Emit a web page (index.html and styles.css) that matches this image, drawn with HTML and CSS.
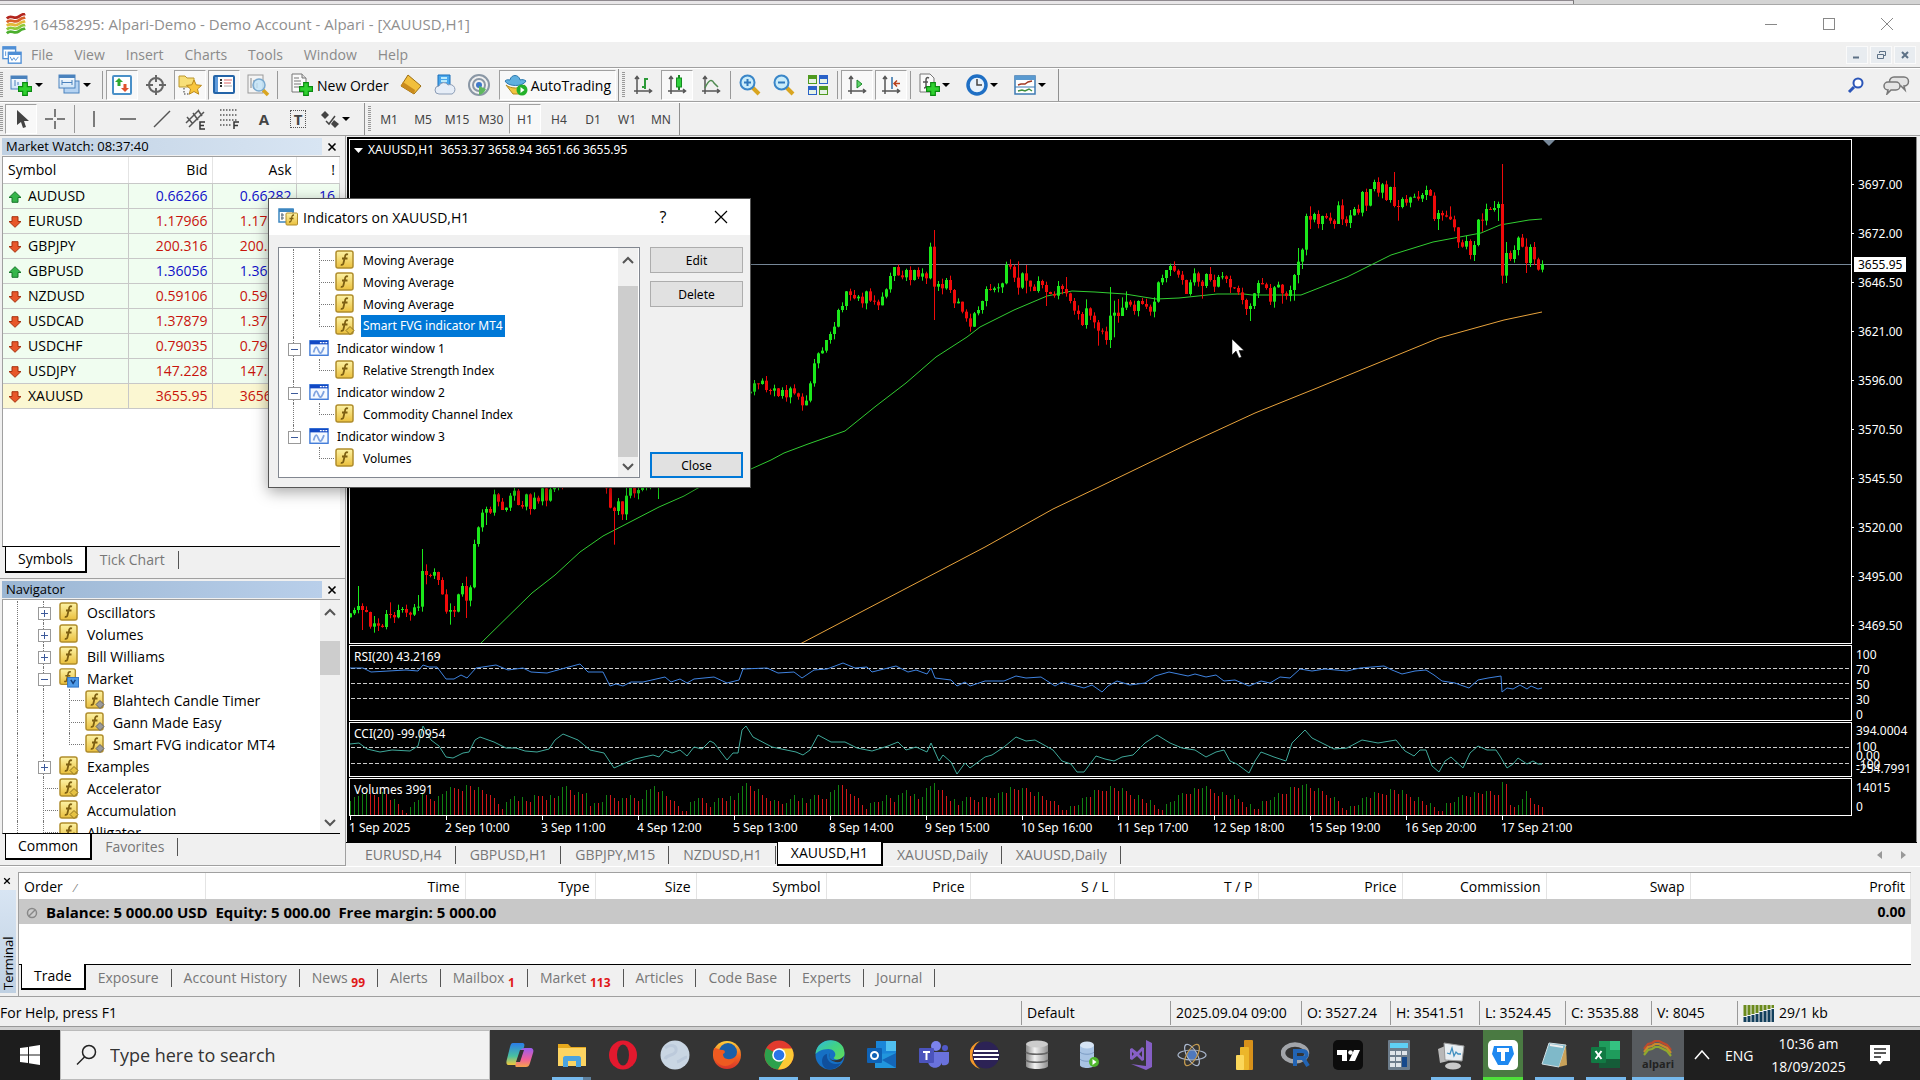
FILE: index.html
```html
<!DOCTYPE html>
<html lang="en">
<head>
    <meta charset="UTF-8">
    <meta name="viewport" content="width=device-width, initial-scale=1.0">
    <title>16458295: Alpari-Demo</title>
    <link rel="stylesheet" href="styles.css">
</head>
<body>

<svg class="defs" width="0" height="0">
    <defs>
        <linearGradient id="gold" x1="0" y1="0" x2="0" y2="1"><stop offset="0" stop-color="#fdf3a6"/><stop offset="1" stop-color="#eabf3c"/></linearGradient>
        <linearGradient id="win" x1="0" y1="0" x2="0" y2="1"><stop offset="0" stop-color="#fff"/><stop offset="1" stop-color="#cfe4f7"/></linearGradient>
        <linearGradient id="metal" x1="0" y1="0" x2="1" y2="0"><stop offset="0" stop-color="#8a8a8a"/><stop offset=".4" stop-color="#f2f2f2"/><stop offset="1" stop-color="#8f8f8f"/></linearGradient>
        <linearGradient id="edge" x1="0" y1="0" x2="1" y2="1"><stop offset="0" stop-color="#2fb6e8"/><stop offset=".45" stop-color="#3fd08a"/><stop offset="1" stop-color="#63dd55"/></linearGradient>
        <linearGradient id="fire" x1="0" y1="0" x2="0" y2="1"><stop offset="0" stop-color="#ffd13c"/><stop offset=".5" stop-color="#f26b21"/><stop offset="1" stop-color="#d8322a"/></linearGradient>
        <linearGradient id="copa" x1="0" y1="0" x2="0" y2="1"><stop offset="0" stop-color="#2a7de8"/><stop offset=".6" stop-color="#49c0a0"/><stop offset="1" stop-color="#f4c93b"/></linearGradient>
        <linearGradient id="copb" x1="0" y1="0" x2="0" y2="1"><stop offset="0" stop-color="#9a5cf0"/><stop offset=".6" stop-color="#f0609a"/><stop offset="1" stop-color="#f5a34a"/></linearGradient>

        <symbol id="plus" viewBox="0 0 12 12"><path d="M4 .5h4V4h3.500v4H8v3.500H4V8H.5V4H4z" fill="#2fd12f" stroke="#0b8a12"/></symbol>
        <symbol id="fx" viewBox="0 0 20 20"><rect x="1" y="1" width="17" height="17" rx="2" fill="url(#gold)" stroke="#b08d2c" stroke-width="1.500"/><path d="M13 4.500c-2-.8-2.700.5-3 2L8.500 13c-.3 1.500-1 2.300-2.700 1.600M7 8.500h5.500" fill="none" stroke="#7d5f12" stroke-width="1.800"/></symbol>
        <symbol id="fxg" viewBox="0 0 20 20"><use href="#fx"/><path d="M15 10.500l4 4-4 4-4-4z" fill="#9a9a9a" stroke="#666"/></symbol>
        <symbol id="fxy" viewBox="0 0 20 20"><use href="#fx"/><path d="M15 10.500l4 4-4 4-4-4z" fill="#e6c243" stroke="#8f7420"/></symbol>
        <symbol id="fxm" viewBox="0 0 22 22"><use href="#fx" width="20" height="20"/><rect x="9.500" y="10.500" width="12" height="10.500" fill="#4f9be8" stroke="#2a6fc4"/><path d="M13 13l2.500 4 2.500-4" fill="none" stroke="#123f7d" stroke-width="1.500"/></symbol>
        <symbol id="iw" viewBox="0 0 22 18"><rect x="1" y="1" width="20" height="16" fill="#f4f9ff" stroke="#3c78d8" stroke-width="1.500"/><path d="M1 1h20v4H1z" fill="#1148c4"/><path d="M12 3h2m1 0h2m1 0h2" stroke="#fff" stroke-width="1.300"/><path d="M5 14c2.500-9 4-6 5.500-2s3 4 6-4" fill="none" stroke="#7fa3e0" stroke-width="2"/></symbol>
        <symbol id="up" viewBox="0 0 14 12"><path d="M7 .7l6 5.800H10v4.800H4V6.500H1z" fill="#35b54a" stroke="#17752a"/></symbol>
        <symbol id="down" viewBox="0 0 14 12"><path d="M7 11.300l6-5.800H10V.7H4v4.800H1z" fill="#e8572a" stroke="#a5300f"/></symbol>
        <symbol id="x" viewBox="0 0 10 10"><path d="M1.500 1.500l7 7m0-7l-7 7" stroke="#000" stroke-width="1.600"/></symbol>
        <symbol id="caret" viewBox="0 0 8 4"><path d="M0 0h8L4 4z"/></symbol>
        <symbol id="axes" viewBox="0 0 20 20"><path d="M4 2v17M1 16h17M2 4l2-2.500L6 4M16 14l2.500 2-2.500 2" fill="none" stroke="#555" stroke-width="1.500"/></symbol>
        <symbol id="doc" viewBox="0 0 20 22"><path d="M2 1h10l4 4v14H2z" fill="#fafafa" stroke="#777"/><path d="M12 1v4h4" fill="#ddd" stroke="#777"/><path d="M4 8h7M4 11h7M4 14h5M4 5h5" stroke="#777"/></symbol>
        <symbol id="lens" viewBox="0 0 22 22"><path d="M13 13l7 7" stroke="#d9a520" stroke-width="4"/><circle cx="8.500" cy="8.500" r="7" fill="#c9ecfa" stroke="#3a86c8" stroke-width="2"/></symbol>
    </defs>
</svg>

<div class="behind"><div class="behind-win"></div></div>

<header class="titlebar">
    <svg class="logo" viewBox="0 0 22 24"><g fill="none" stroke-width="3"><path d="M1 6c5-5 8 2 13-2s5-2 7-3" stroke="#b3261e"/><path d="M1 10c5-5 8 2 13-2s5-2 7-3" stroke="#d9622b"/><path d="M1 14c5-5 8 2 13-2s5-2 7-3" stroke="#e3b83a"/><path d="M1 18c5-5 8 2 13-2s5-2 7-3" stroke="#8fc93a"/><path d="M1 22c5-5 8 2 13-2s5-2 7-3" stroke="#4caf2e"/></g></svg>
    <h1>16458295: Alpari-Demo - Demo Account - Alpari - [XAUUSD,H1]</h1>
    <div class="win-btns">
        <button aria-label="Minimize"><svg width="12" height="12"><path d="M0 6.500h12" stroke="#888"/></svg></button>
        <button aria-label="Maximize"><svg width="12" height="12"><rect x=".5" y=".5" width="11" height="11" fill="none" stroke="#888"/></svg></button>
        <button aria-label="Close"><svg width="12" height="12"><path d="M0 0l12 12M12 0L0 12" stroke="#888"/></svg></button>
    </div>
</header>

<nav class="menubar">
    <svg class="menu-logo" viewBox="0 0 22 22"><rect x="1" y="2" width="14" height="13" fill="#fff" stroke="#4f8fd6" stroke-width="1.500"/><path d="M1 3.500h14" stroke="#4f8fd6" stroke-width="3"/><rect x="7" y="8" width="14" height="12" fill="#fff" stroke="#4f8fd6" stroke-width="1.500"/><path d="M7 9.500h14" stroke="#4f8fd6" stroke-width="3"/><path d="M9 13l2 4 2-3 2 3 3-4M4 7v5m3-4v3" stroke="#4f8fd6" fill="none"/></svg>
    <a href="#">File</a><a href="#">View</a><a href="#">Insert</a><a href="#">Charts</a><a href="#">Tools</a><a href="#">Window</a><a href="#">Help</a>
    <div class="mdi-btns">
        <button aria-label="Minimize chart"><svg width="8" height="8"><path d="M0 6.500h6" stroke="#5d7186" stroke-width="2"/></svg></button>
        <button aria-label="Restore chart"><svg width="9" height="8"><path d="M2.500 2V.5h6v4H7M.5 3.500h6v4h-6z" fill="none" stroke="#5d7186"/></svg></button>
        <button aria-label="Close chart"><svg width="8" height="8"><path d="M1 1l6 6m0-6L1 7" stroke="#5d7186" stroke-width="2"/></svg></button>
    </div>
</nav>

<div class="toolbar">
    <div class="group">
        <i class="grip"></i>
        <button class="tool drop" aria-label="New chart"><svg width="24" height="24"><rect x="2" y="3" width="16" height="13" fill="url(#win)" stroke="#4a82bd"/><path d="M2 4.500h16" stroke="#4a82bd" stroke-width="3"/><path d="M6 7v6m3-4v3" stroke="#4a82bd"/><use href="#plus" x="9" y="9" width="14" height="14"/></svg><svg width="8" height="4"><use href="#caret"/></svg></button>
        <button class="tool drop" aria-label="Profiles"><svg width="24" height="24"><rect x="7" y="8" width="15" height="12" fill="#b5d3f2" stroke="#4a82bd"/><rect x="2" y="2" width="16" height="13" fill="url(#win)" stroke="#4a82bd"/><path d="M2 3.500h16" stroke="#4a82bd" stroke-width="3"/><path d="M5 7v5M15 7v5M5 9.500h10" stroke="#4a82bd"/></svg><svg width="8" height="4"><use href="#caret"/></svg></button>
        <i class="sep"></i>
        <button class="tool on" aria-label="Market Watch"><svg width="22" height="22"><rect x="2" y="2" width="18" height="18" rx="1" fill="#fff" stroke="#4a90c8" stroke-width="2"/><path d="M8 4l4 4h-2.500v4h-3V8H4z" fill="#2fa82f"/><path d="M14 18l4-4h-2.500v-4h-3v4H10z" fill="#e0502a"/></svg></button>
        <button class="tool" aria-label="Data Window"><svg width="22" height="22"><circle cx="11" cy="11" r="7" fill="none" stroke="#666" stroke-width="2"/><path d="M11 1v7m0 6v7M1 11h7m6 0h7" stroke="#666" stroke-width="2"/></svg></button>
        <button class="tool on" aria-label="Navigator"><svg width="24" height="24"><path d="M1 3h6l2 2h7v9H1z" fill="#f8df78" stroke="#b9962e"/><path d="M6 15v6h6" fill="none" stroke="#333" stroke-dasharray="1.500 1.500"/><path d="M16 7l2.200 4.800 5.300.6-4 3.600 1.200 5.200-4.700-2.700-4.700 2.700 1.200-5.200-4-3.600 5.300-.6z" fill="#f9c63d" stroke="#bb8a1c"/></svg></button>
        <button class="tool on" aria-label="Terminal"><svg width="22" height="22"><rect x="1" y="2" width="20" height="17" rx="1" fill="#fff" stroke="#2464a8" stroke-width="2"/><path d="M2 3h3v15H2z" fill="#5f9bdb"/><path d="M7 6h2M7 9h2M7 12h2" stroke="#333" stroke-width="2"/><path d="M11 6h8M11 9h7" stroke="#d66"/><path d="M11 12h8" stroke="#aaa"/></svg></button>
        <button class="tool" aria-label="Strategy Tester"><svg width="24" height="24"><rect x="2" y="2" width="15" height="18" fill="#f4f4f4" stroke="#999"/><path d="M5 5v10m3-8v9m3-6v5" stroke="#888"/><path d="M17 17l5 5" stroke="#d9a520" stroke-width="3.500"/><circle cx="13" cy="12" r="6" fill="#bfe2f7" fill-opacity=".8" stroke="#7aa9cf" stroke-width="1.500"/></svg></button>
        <i class="sep"></i>
        <button class="tool wide order"><svg width="24" height="24"><use href="#doc" width="20" height="22"/><use href="#plus" x="9" y="9" width="14" height="14"/></svg>New Order</button>
        <button class="tool" aria-label="MetaEditor"><svg width="24" height="22"><path d="M9 1l13 11-7 8L2 12z" fill="#f2bf3c" stroke="#9c6d12"/><path d="M2 12l13 8 1-4L4 8z" fill="#c98a1c"/></svg></button>
        <button class="tool" aria-label="Cloud"><svg width="24" height="24"><path d="M5 2h12v11H5z" fill="#48a6ec" stroke="#1b6fb8"/><path d="M8 5h6M8 8h6" stroke="#dff" stroke-width="1.500"/><path d="M6 21a4 4 0 010-8 5 5 0 019-1 4 4 0 014 9z" fill="#e6edf7" stroke="#8b9cb5"/></svg></button>
        <button class="tool" aria-label="Signals"><svg width="24" height="24"><g fill="none" stroke="#8a97a5" stroke-width="2"><circle cx="12" cy="12" r="10"/><circle cx="12" cy="12" r="6"/></g><circle cx="12" cy="12" r="3" fill="#3f78c8"/><path d="M12 13v9a10 10 0 007-6z" fill="#5fb85f"/></svg></button>
        <button class="tool wide on"><svg width="24" height="24"><path d="M2 12c5 4 14 4 19 0l-6 9h-6z" fill="#f1c43f" stroke="#b08a22"/><path d="M1 8c2-2 4-1 5-1 1-6 9-6 10 0 2-1 5 0 6 1-3 6-18 6-21 0z" fill="#5fb0e0" stroke="#2c79ae"/><circle cx="18" cy="17" r="5.500" fill="#22b02a"/><path d="M16.500 14v6l4-3z" fill="#fff"/></svg>AutoTrading</button>
    </div>
    <div class="group">
        <i class="grip"></i>
        <button class="tool" aria-label="Bar chart"><svg width="20" height="20"><use href="#axes"/><path d="M12 3v11M12 4h3M9 12h3" stroke="#2c9a38" stroke-width="2"/></svg></button>
        <button class="tool on" aria-label="Candlesticks"><svg width="20" height="20"><use href="#axes"/><path d="M12 0v15" stroke="#178a22" stroke-width="2"/><rect x="9.500" y="3" width="5" height="9" fill="#2fd13c" stroke="#178a22"/></svg></button>
        <button class="tool" aria-label="Line chart"><svg width="20" height="20"><use href="#axes"/><path d="M4 13c4-9 7-9 9-5l4 4" fill="none" stroke="#4f8a50" stroke-width="1.500"/></svg></button>
        <i class="sep"></i>
        <button class="tool" aria-label="Zoom In"><svg width="22" height="22"><use href="#lens"/><path d="M5 8.500h7M8.500 5v7" stroke="#2f79bd" stroke-width="2"/></svg></button>
        <button class="tool" aria-label="Zoom Out"><svg width="22" height="22"><use href="#lens"/><path d="M5 8.500h7" stroke="#2f79bd" stroke-width="2"/></svg></button>
        <button class="tool" aria-label="Tile Windows"><svg width="22" height="22"><path d="M1 1h9v9H1zM12 12h9v9h-9z" fill="#4f9a1f"/><path d="M12 1h9v9h-9zM1 12h9v9H1z" fill="#2a62c8"/><path d="M2 5h7v4H2zM13 5h7v4h-7zM2 16h7v4H2zM13 16h7v4h-7z" fill="#e6f2e6"/></svg></button>
        <i class="sep"></i>
        <button class="tool on" aria-label="Auto Scroll"><svg width="20" height="20"><use href="#axes"/><path d="M10 5v8l5-4z" fill="#5fd66a" stroke="#1c8a2a"/></svg></button>
        <button class="tool on" aria-label="Chart Shift"><svg width="20" height="20"><use href="#axes"/><path d="M11 2v12" stroke="#2f6fa8" stroke-width="1.500"/><path d="M19 8.500h-6m3-3l-3 3 3 3" fill="none" stroke="#b8401c" stroke-width="1.500"/></svg></button>
        <i class="sep"></i>
        <button class="tool drop" aria-label="Indicators"><svg width="22" height="24"><path d="M2 1h10l4 4v14H2z" fill="#fafafa" stroke="#777"/><path d="M11 5c-2-1-3 0-3 2v6c0 2-1 2-2 2M5 9h5" fill="none" stroke="#555" stroke-width="1.500"/><use href="#plus" x="8" y="9" width="14" height="14"/></svg><svg width="8" height="4"><use href="#caret"/></svg></button>
        <button class="tool drop" aria-label="Periods"><svg width="22" height="22"><circle cx="11" cy="11" r="9" fill="#e8f2fb" stroke="#1f6fc4" stroke-width="3.500"/><path d="M11 5v6h5" fill="none" stroke="#444" stroke-width="1.500"/></svg><svg width="8" height="4"><use href="#caret"/></svg></button>
        <button class="tool drop" aria-label="Templates"><svg width="22" height="20"><rect x="1" y="1" width="20" height="18" fill="#fff" stroke="#3d7ab3" stroke-width="1.500"/><path d="M1 3h20" stroke="#5a9ad0" stroke-width="4"/><path d="M1 12h20" stroke="#3d7ab3"/><path d="M4 10l3-1 4 0 3-2 4-1" fill="none" stroke="#a33a22" stroke-width="1.500"/><path d="M4 16l4-1 3 1 4-2 3 2" fill="none" stroke="#3f8f3f" stroke-width="1.500"/></svg><svg width="8" height="4"><use href="#caret"/></svg></button>
    </div>
    <div class="right-tools">
        <button class="tool" aria-label="Search"><svg width="18" height="18"><path d="M7 11l-5 5" stroke="#2c56b8" stroke-width="3"/><circle cx="11" cy="7" r="4.500" fill="#fff" stroke="#2c56b8" stroke-width="2"/></svg></button>
        <button class="tool" aria-label="Chat"><svg width="28" height="20"><g fill="#e4e4e4" stroke="#777" stroke-width="1.500"><path d="M12 2h10a4 4 0 010 9l1 4-4-4h-7a4 4 0 010-9z"/><path d="M6 7h8a4 4 0 010 8h-5l-4 4 1-4a4 4 0 010-8z"/></g></svg></button>
    </div>
</div>

<div class="toolbar">
    <div class="group">
        <i class="grip"></i>
        <button class="tool on" aria-label="Cursor"><svg width="18" height="22"><path d="M5 2v15l4-3 2 6 3-1-2-6h5z" fill="#444"/></svg></button>
        <button class="tool" aria-label="Crosshair"><svg width="20" height="20"><path d="M10 0v8m0 4v8M0 10h8m4 0h8" stroke="#555" stroke-width="1.500"/></svg></button>
        <i class="sep"></i>
        <button class="tool" aria-label="Vertical line"><svg width="18" height="18"><path d="M9 1v16" stroke="#555" stroke-width="1.500"/></svg></button>
        <button class="tool" aria-label="Horizontal line"><svg width="18" height="18"><path d="M1 9h16" stroke="#555" stroke-width="1.500"/></svg></button>
        <button class="tool" aria-label="Trendline"><svg width="18" height="18"><path d="M1 17L17 1" stroke="#555" stroke-width="1.500"/></svg></button>
        <button class="tool" aria-label="Channel"><svg width="22" height="22"><path d="M1 15L14 2M4 19L19 4M2 9l6 7M8 5l5 7M13 2l4 6" stroke="#555" stroke-width="1.500"/><path d="M20 14h-5v7h5M15 17.500h4" fill="none" stroke="#333" stroke-width="1.500"/></svg></button>
        <button class="tool" aria-label="Fibonacci"><svg width="22" height="22"><path d="M1 2h18M1 7h18M1 12h18M1 17h11" stroke="#555" stroke-width="1.500" stroke-dasharray="1.500 1.500"/><path d="M20 14h-5v7M15 17.500h4" fill="none" stroke="#333" stroke-width="1.500"/></svg></button>
        <button class="tool letter">A</button>
        <button class="tool letter"><span class="tbox">T</span></button>
        <button class="tool drop" aria-label="Arrows"><svg width="20" height="20"><path d="M5 2l4 4-4 4-4-4zM14 11l5 4-4 4-4-4z" fill="#444"/><path d="M6 12l3 3 6-8" fill="none" stroke="#444" stroke-width="1.500"/></svg><svg width="8" height="4"><use href="#caret"/></svg></button>
    </div>
    <div class="group">
        <i class="grip"></i>
        <button class="tool tf">M1</button><button class="tool tf">M5</button><button class="tool tf">M15</button><button class="tool tf">M30</button><button class="tool tf on">H1</button><button class="tool tf">H4</button><button class="tool tf">D1</button><button class="tool tf">W1</button><button class="tool tf">MN</button>
    </div>
</div>

<main class="work">
    <aside class="side">
        <section class="panel market">
            <div class="panel-head light"><h2>Market Watch: 08:37:40</h2><button aria-label="Close"><svg width="10" height="10"><use href="#x"/></svg></button></div>
            <div class="panel-body">
                <table class="quotes">
                    <thead><tr><th>Symbol</th><th>Bid</th><th>Ask</th><th>!</th></tr></thead>
                    <tbody>
                    <tr class="rise"><td><svg><use href="#up"/></svg>AUDUSD</td><td>0.66266</td><td>0.66282</td><td>16</td></tr>
                    <tr><td><svg><use href="#down"/></svg>EURUSD</td><td>1.17966</td><td>1.17980</td><td>14</td></tr>
                    <tr><td><svg><use href="#down"/></svg>GBPJPY</td><td>200.316</td><td>200.345</td><td>29</td></tr>
                    <tr class="rise"><td><svg><use href="#up"/></svg>GBPUSD</td><td>1.36056</td><td>1.36074</td><td>18</td></tr>
                    <tr><td><svg><use href="#down"/></svg>NZDUSD</td><td>0.59106</td><td>0.59128</td><td>22</td></tr>
                    <tr><td><svg><use href="#down"/></svg>USDCAD</td><td>1.37879</td><td>1.37898</td><td>19</td></tr>
                    <tr><td><svg><use href="#down"/></svg>USDCHF</td><td>0.79035</td><td>0.79054</td><td>19</td></tr>
                    <tr><td><svg><use href="#down"/></svg>USDJPY</td><td>147.228</td><td>147.244</td><td>16</td></tr>
                    <tr class="gold"><td><svg><use href="#down"/></svg>XAUUSD</td><td>3655.95</td><td>3656.30</td><td>35</td></tr>
                    </tbody>
                </table>
            </div>
            <div class="tabs"><button class="active">Symbols</button><button>Tick Chart</button></div>
        </section>
        <section class="panel navigator">
            <div class="panel-head"><h2>Navigator</h2><button aria-label="Close"><svg width="10" height="10"><use href="#x"/></svg></button></div>
            <div class="panel-body scrolled">
                <ul class="tree">
                    <li><i class="v"></i><i class="box plus"></i><svg><use href="#fx"/></svg>Oscillators</li>
                    <li><i class="v"></i><i class="box plus"></i><svg><use href="#fx"/></svg>Volumes</li>
                    <li><i class="v"></i><i class="box plus"></i><svg><use href="#fx"/></svg>Bill Williams</li>
                    <li><i class="v"></i><i class="box"></i><svg><use href="#fxm"/></svg>Market</li>
                    <li><i class="v"></i><i class="v"></i><i class="t"></i><svg><use href="#fxg"/></svg>Blahtech Candle Timer</li>
                    <li><i class="v"></i><i class="v"></i><i class="t"></i><svg><use href="#fxg"/></svg>Gann Made Easy</li>
                    <li><i class="v"></i><i class="v"></i><i class="l"></i><svg><use href="#fxg"/></svg>Smart FVG indicator MT4</li>
                    <li><i class="v"></i><i class="box plus"></i><svg><use href="#fxy"/></svg>Examples</li>
                    <li><i class="v"></i><i class="t"></i><svg><use href="#fxy"/></svg>Accelerator</li>
                    <li><i class="v"></i><i class="t"></i><svg><use href="#fxy"/></svg>Accumulation</li>
                    <li><i class="v"></i><i class="t"></i><svg><use href="#fxy"/></svg>Alligator</li>
                </ul>
                <div class="scroll"><svg width="12" height="8"><path d="M1 7l5-5 5 5" fill="none" stroke="#555" stroke-width="2"/></svg><i class="thumb nav-thumb"></i><svg width="12" height="8"><path d="M1 1l5 5 5-5" fill="none" stroke="#555" stroke-width="2"/></svg></div>
            </div>
            <div class="tabs"><button class="active">Common</button><button>Favorites</button></div>
        </section>
    </aside>

    <section class="charts">
        <div class="chart">
            <div class="pane price">
                <div class="plot"><svg id="price"></svg><p class="caption"><svg width="9" height="5"><path d="M0 0h9L4.500 5z" fill="#fff"/></svg>XAUUSD,H1&nbsp; 3653.37 3658.94 3651.66 3655.95</p></div>
                <div class="axis"><span>3697.00</span><span>3672.00</span><span>3646.50</span><span>3621.00</span><span>3596.00</span><span>3570.50</span><span>3545.50</span><span>3520.00</span><span>3495.00</span><span>3469.50</span><b>3655.95</b></div>
            </div>
            <div class="pane rsi">
                <div class="plot"><svg id="rsi"></svg><p class="caption">RSI(20) 43.2169</p></div>
                <div class="axis sub"><span>100</span><span>70</span><span>50</span><span>30</span><span>0</span></div>
            </div>
            <div class="pane cci">
                <div class="plot"><svg id="cci"></svg><p class="caption">CCI(20) -99.0954</p></div>
                <div class="axis sub"><span>394.0004</span><span>100</span><span>0.00</span><span>-100</span><span>-254.7991</span></div>
            </div>
            <div class="pane vol">
                <div class="plot"><svg id="vol"></svg><p class="caption">Volumes 3991</p></div>
                <div class="axis sub"><span>14015</span><span>0</span></div>
            </div>
            <div class="dates"><span>1 Sep 2025</span><span>2 Sep 10:00</span><span>3 Sep 11:00</span><span>4 Sep 12:00</span><span>5 Sep 13:00</span><span>8 Sep 14:00</span><span>9 Sep 15:00</span><span>10 Sep 16:00</span><span>11 Sep 17:00</span><span>12 Sep 18:00</span><span>15 Sep 19:00</span><span>16 Sep 20:00</span><span>17 Sep 21:00</span></div>
        </div>
        <div class="tabs chart-tabs"><button>EURUSD,H4</button><button>GBPUSD,H1</button><button>GBPJPY,M15</button><button>NZDUSD,H1</button><button class="active">XAUUSD,H1</button><button>XAUUSD,Daily</button><button>XAUUSD,Daily</button><span class="tab-arrows"><svg width="6" height="8"><path d="M5 0v8L0 4z" fill="#999"/></svg><svg width="6" height="8"><path d="M0 0v8l5-4z" fill="#999"/></svg></span></div>
    </section>

    <svg class="pointer" width="14" height="22"><path d="M1 1v16l4-4 3 7 2.500-1L8 12.500h5z" fill="#fff" stroke="#000" stroke-width=".5"/></svg>

    <div class="dialog" role="dialog" aria-label="Indicators">
        <div class="dialog-head">
            <svg width="20" height="18"><rect x="1" y="1" width="14" height="13" fill="#fff" stroke="#3d86c0" stroke-width="1.500"/><path d="M1 2.500h15" stroke="#3d86c0" stroke-width="3"/><path d="M4 5v7m-1-5h3m-3 3h3" stroke="#567"/><rect x="8" y="5" width="11.500" height="12" rx="1" fill="url(#gold)" stroke="#b08d2c"/><path d="M16 7c-2 0-2 1-2.500 4s-1 3-2.500 3M11.500 10.500h4" fill="none" stroke="#7d5f12" stroke-width="1.300"/></svg>
            <h2>Indicators on XAUUSD,H1</h2>
            <button class="help" aria-label="Help">?</button>
            <button aria-label="Close"><svg width="14" height="14"><path d="M1 1l12 12M13 1L1 13" stroke="#000" stroke-width="1.200"/></svg></button>
        </div>
        <div class="dialog-body">
            <div class="list scrolled">
                <ul class="tree">
                    <li><i class="v"></i><i class="t"></i><svg><use href="#fx"/></svg>Moving Average</li>
                    <li><i class="v"></i><i class="t"></i><svg><use href="#fx"/></svg>Moving Average</li>
                    <li><i class="v"></i><i class="t"></i><svg><use href="#fx"/></svg>Moving Average</li>
                    <li><i class="v"></i><i class="l"></i><svg><use href="#fxy"/></svg><mark>Smart FVG indicator MT4</mark></li>
                    <li><i class="box"></i><svg><use href="#iw"/></svg>Indicator window 1</li>
                    <li><i class="v"></i><i class="l"></i><svg><use href="#fx"/></svg>Relative Strength Index</li>
                    <li><i class="box"></i><svg><use href="#iw"/></svg>Indicator window 2</li>
                    <li><i class="v"></i><i class="l"></i><svg><use href="#fx"/></svg>Commodity Channel Index</li>
                    <li><i class="box end"></i><svg><use href="#iw"/></svg>Indicator window 3</li>
                    <li><i></i><i class="l"></i><svg><use href="#fx"/></svg>Volumes</li>
                </ul>
                <div class="scroll"><svg width="12" height="8"><path d="M1 7l5-5 5 5" fill="none" stroke="#555" stroke-width="2"/></svg><i class="thumb list-thumb"></i><svg width="12" height="8"><path d="M1 1l5 5 5-5" fill="none" stroke="#555" stroke-width="2"/></svg></div>
            </div>
            <div class="dialog-btns"><button>Edit</button><button>Delete</button><button class="default">Close</button></div>
        </div>
    </div>
</main>

<section class="terminal">
    <div class="term-side"><button aria-label="Close"><svg width="8" height="10"><use href="#x" width="8" height="10"/></svg></button><h2>Terminal</h2></div>
    <div class="term-main">
        <table class="orders">
            <colgroup><col class="w186"><col class="w260"><col class="w130"><col class="w101"><col class="w130"><col class="w144"><col class="w144"><col class="w144"><col class="w144"><col class="w144"><col class="w144"><col></colgroup>
            <thead><tr><th>Order <small>⁄</small></th><th>Time</th><th>Type</th><th>Size</th><th>Symbol</th><th>Price</th><th>S / L</th><th>T / P</th><th>Price</th><th>Commission</th><th>Swap</th><th>Profit</th></tr></thead>
            <tbody><tr><td colspan="11"><svg width="12" height="12"><circle cx="6" cy="6" r="4.500" fill="#ccc" stroke="#888" stroke-width="1.500"/><path d="M3 9l6-6" stroke="#888" stroke-width="1.500"/></svg>Balance: 5 000.00 USD&nbsp; Equity: 5 000.00&nbsp; Free margin: 5 000.00</td><td>0.00</td></tr></tbody>
        </table>
        <div class="tabs term-tabs"><button class="active">Trade</button><button>Exposure</button><button>Account History</button><button>News <sub>99</sub></button><button>Alerts</button><button>Mailbox <sub>1</sub></button><button>Market <sub>113</sub></button><button>Articles</button><button>Code Base</button><button>Experts</button><button>Journal</button></div>
    </div>
</section>

<footer class="status">
    <span class="help-text">For Help, press F1</span>
    <span class="s149">Default</span><span class="s131">2025.09.04 09:00</span><span class="s89">O: 3527.24</span><span class="s89">H: 3541.51</span><span class="s86">L: 3524.45</span><span class="s86">C: 3535.88</span><span class="s86">V: 8045</span>
    <span class="net"><svg width="31" height="17"><path d="M2 0v11M6 0v10M10 0v9M14 0v8M18 0v6M22 0v5M26 0v4M30 0v3" stroke="#6b8a1c" stroke-width="3"/><path d="M2 12v5M6 11v6M10 10v7M14 9v8M18 7v10M22 6v11M26 5v12M30 4v13" stroke="#123f5c" stroke-width="3"/></svg>29/1 kb</span>
</footer>
<div class="under"></div>

<div class="taskbar">
    <button class="start" aria-label="Start"><svg width="20" height="20"><path d="M0 3l8-1v7.500H0zM9 1.800L20 0v9.500H9zM0 10.500h8V18l-8-1zM9 10.500h11V20L9 18.200z" fill="#fff"/></svg></button>
    <label class="search"><svg width="22" height="22"><circle cx="13" cy="8" r="6.500" fill="none" stroke="#222" stroke-width="1.500"/><path d="M8.500 13L1 20.500" stroke="#222" stroke-width="1.500"/></svg><input type="text" placeholder="Type here to search" aria-label="Search"></label>
    <div class="apps">
        <button aria-label="Copilot"><svg viewBox="0 0 30 30"><path d="M8 3h9c2 0 3 1 2 4l-4 14c-1 3-2 4-5 4H4C1 25 1 22 2 19L5 7c1-3 1-4 3-4z" fill="url(#copa)"/><path d="M20 8h5c3 0 4 2 3 5l-3 10c-1 3-2 4-4 4h-9c-2 0-2-1-1-4l4-12c1-2 2-3 5-3z" fill="url(#copb)"/><path d="M15 10h4l-4 12h-4z" fill="#333"/></svg></button>
        <button class="run more" aria-label="Explorer"><svg viewBox="0 0 30 30"><path d="M1 4h10l3 3h15v18H1z" fill="#e6a81c"/><path d="M1 8h28v18H1z" fill="#fcd462"/><path d="M6 27v-9c0-1 1-2 2-2h14c1 0 2 1 2 2v9h-5v-6h-8v6z" fill="#4aa3e0"/></svg></button>
        <button aria-label="Opera"><svg viewBox="0 0 30 30"><ellipse cx="15" cy="15" rx="14" ry="14.500" fill="#e3192e"/><ellipse cx="15" cy="15" rx="6" ry="10.500" fill="#333"/></svg></button>
        <button aria-label="Moon"><svg viewBox="0 0 30 30"><circle cx="15" cy="15" r="14.500" fill="#c9d6e3"/><path d="M5 8c6-5 12-2 11 3s-9 3-11 8M17 22c4-1 7-5 10-5" stroke="#bccadb" stroke-width="3" fill="none"/></svg></button>
        <button aria-label="Firefox"><svg viewBox="0 0 30 30"><circle cx="15" cy="15" r="14" fill="url(#fire)"/><circle cx="16" cy="12" r="9" fill="#1a5fa8"/><path d="M2 8c3 0 5 2 9 2 2 0 3 3 0 4 0 6 8 7 13 2-1 8-9 12-15 9S0 16 2 8z" fill="#ef5a20"/></svg></button>
        <button class="run" aria-label="Chrome"><svg viewBox="0 0 30 30"><circle cx="15" cy="15" r="14.500" fill="#e33b2e"/><path d="M15 15L2.400 8A14.500 14.500 0 0014 29.500l7-11z" fill="#2da14c"/><path d="M15 8.500h13A14.500 14.500 0 0114 29.500l7-12z" fill="#fcc934"/><circle cx="15" cy="15" r="6.800" fill="#fff"/><circle cx="15" cy="15" r="5.300" fill="#2b74e8"/></svg></button>
        <button class="run" aria-label="Edge"><svg viewBox="0 0 30 30"><circle cx="15" cy="15" r="14.500" fill="#1670c4"/><path d="M.5 14C2-4 29-4 29.500 13c0 7-8 8-11 5 4-3 1-9-5-9-7 0-11 3-13 5z" fill="url(#edge)"/><path d="M12 14c-1 7 5 12 14 9-4 6-10 7-14 6-7-3-6-14 0-15z" fill="#0f4f9c"/><path d="M15 13c-2 3-1 5 2 7 4 1 8 0 12-4-1 3-2 5-4 6-8 1-13-4-10-9z" fill="#333"/></svg></button>
        <button aria-label="Outlook"><svg viewBox="0 0 30 30"><path d="M9 1h20v20H9z" fill="#1a86d9"/><path d="M19 1h10v10H19z" fill="#50c0f0"/><path d="M8 14l21-1v15H8z" fill="#2196dd"/><path d="M29 13v15L15 20z" fill="#1466b8"/><rect x="0" y="8" width="15" height="15" rx="1" fill="#0f62b5"/><circle cx="7.500" cy="15.500" r="3.500" fill="none" stroke="#fff" stroke-width="2"/></svg></button>
        <button aria-label="Teams"><svg viewBox="0 0 30 30"><circle cx="17" cy="6" r="5" fill="#7b83eb"/><circle cx="26" cy="8" r="3" fill="#5059c9"/><path d="M22 12h8v9c0 4-4 5-7 4zM9 12h14v9c0 9-14 9-14 0z" fill="#6a72dd"/><rect x="0" y="8" width="15" height="15" rx="1" fill="#4b53bc"/><path d="M4 12h7M7.500 12v8" stroke="#fff" stroke-width="2"/></svg></button>
        <button aria-label="Eclipse"><svg viewBox="0 0 30 30"><path d="M10 1a14.500 14.500 0 000 28A17 17 0 0110 1z" fill="#f5972a"/><circle cx="16" cy="15" r="13.500" fill="#2c2255"/><path d="M4 11h24M3 15h26M4 19h24" stroke="#fff" stroke-width="2"/></svg></button>
        <button aria-label="Database"><svg viewBox="0 0 30 30"><path d="M4 4v22c0 4 22 4 22 0V4z" fill="url(#metal)"/><ellipse cx="15" cy="4" rx="11" ry="3.500" fill="#ccc"/><path d="M4 12c2 3 20 3 22 0M4 20c2 3 20 3 22 0" fill="none" stroke="#666" stroke-width="1.500"/></svg></button>
        <button aria-label="SQL"><svg viewBox="0 0 30 30"><path d="M6 5v20c0 4 14 4 14 0V5z" fill="#a9c4e4"/><ellipse cx="13" cy="5" rx="7" ry="3.500" fill="#d6e4f4"/><path d="M6 12c2 3 12 3 14 0M6 19c2 3 12 3 14 0" fill="none" stroke="#7c9cc4"/><circle cx="20" cy="22" r="5" fill="#4fb52c"/><path d="M18.500 19v6l4-3z" fill="#fff"/></svg></button>
        <button aria-label="Visual Studio"><svg viewBox="0 0 30 30"><path d="M20 0l6 3v24l-6 3L5 24l15 2z" fill="#865fc5"/><path d="M4 9l2-1 5 4 5-5 2 1v12l-2 1-5-5-5 4-2-1zm2 3v4l2-2zm10-1l-3 3 3 3z" fill="#865fc5"/></svg></button>
        <button aria-label="Atom"><svg viewBox="0 0 30 30"><circle cx="15" cy="15" r="5" fill="#4f79bd"/><g fill="none" stroke="#a9b6cc" stroke-width="1.200"><ellipse cx="15" cy="15" rx="14" ry="5"/><ellipse cx="15" cy="15" rx="12" ry="5" transform="rotate(60 15 15)"/><ellipse cx="15" cy="15" rx="12" ry="5" transform="rotate(120 15 15)" stroke="#c29a50"/></g></svg></button>
        <button aria-label="Power BI"><svg viewBox="0 0 30 30"><rect x="15" y="0" width="9" height="30" rx="1" fill="#d8911a"/><rect x="11" y="7" width="9" height="23" rx="1" fill="#ecb62a"/><rect x="7" y="15" width="8" height="15" rx="1" fill="#fbd75a"/></svg></button>
        <button aria-label="R"><svg viewBox="0 0 30 30"><ellipse cx="14" cy="13" rx="12" ry="8.500" fill="none" stroke="#a2a5aa" stroke-width="4.500"/><path d="M14 26V11h7c6 0 6 7 1 7h-8m8 0l5 8" fill="none" stroke="#2264b4" stroke-width="4"/></svg></button>
        <button aria-label="TradingView"><svg viewBox="0 0 30 30"><rect width="30" height="30" rx="5" fill="#0c0c0c"/><path d="M4 10h10v11h-5v-6H4zM21 10h6l-5 11h-6z" fill="#fff"/><circle cx="17.500" cy="12.500" r="2.300" fill="#fff"/></svg></button>
        <button aria-label="Calculator"><svg viewBox="0 0 30 30"><rect x="4" width="22" height="30" rx="1" fill="#6d7d8c"/><path d="M6 3h18v5H6z" fill="#5fd0f5"/><path d="M6 11h5v4H6zm6 0h5v4h-5zm6 0h5v4h-5zM6 17h5v4H6zm6 0h5v4h-5zM6 23h5v4H6zm6 0h5v4h-5z" fill="#dfe5ea"/><path d="M18 17h5v10h-5z" fill="#174a8c"/></svg></button>
        <button class="run" aria-label="Monitor"><svg viewBox="0 0 30 30"><path d="M2 9l7-3 3 15-8 2z" fill="#b8b8b8"/><path d="M8 3l20 3-2 15-17-1z" fill="#e8eef2" stroke="#999"/><path d="M11 13l3 1 2-6 2 8 2-4 2 2 3 0" fill="none" stroke="#3f8fc0" stroke-width="1.300"/><ellipse cx="17" cy="26" rx="8" ry="3.500" fill="#c9c9c9"/></svg></button>
        <button class="run green" aria-label="Tester"><svg viewBox="0 0 30 30"><rect width="30" height="30" rx="5" fill="#fff"/><path d="M6 6h18l2 8-6 11H10L4 14z" fill="#1e88f0"/><path d="M9 10h12M15 10v11" stroke="#fff" stroke-width="4"/></svg></button>
        <button class="run" aria-label="Notepad"><svg viewBox="0 0 30 30"><path d="M9 3l17 2-7 22L2 24z" fill="#7fb9c9" stroke="#cfdde2"/><path d="M26 5l1 20-8 2z" fill="#c9a25a"/><path d="M10 5l13 2" stroke="#eee" stroke-width="2"/></svg></button>
        <button class="run" aria-label="Excel"><svg viewBox="0 0 30 30"><path d="M8 1h21v27H8z" fill="#1f9c5c"/><path d="M19 1h10v9H19z" fill="#34c281"/><path d="M8 19h21v9H8z" fill="#155c38"/><rect x="0" y="7" width="15" height="16" rx="1" fill="#117a43"/><path d="M4.500 11l6 8m0-8l-6 8" stroke="#fff" stroke-width="2"/></svg></button>
        <button class="run current" aria-label="alpari"><svg viewBox="0 0 30 17"><g fill="none" stroke-width="2.200"><path d="M1 9l4-5 4-1 3-2 4 0 4 2 4 2 4 5" stroke="#c0492c"/><path d="M1 12l4-5 4-1 3-2 4 0 4 2 4 2 4 5" stroke="#c98a2c"/><path d="M1 15l4-5 4-1 3-2 4 0 4 2 4 2 4 5" stroke="#8fa92f"/></g></svg><span>alpari</span></button>
    </div>
    <div class="tray">
        <svg width="16" height="10"><path d="M1 9l7-8 7 8" fill="none" stroke="#fff" stroke-width="1.500"/></svg>
        <span>ENG</span>
        <time>10:36 am<br>18/09/2025</time>
        <svg class="note" width="20" height="22"><path d="M0 1h20v16h-7l-3 4-3-4H0z" fill="#fff"/><path d="M4 5h12M4 9h12M4 13h7" stroke="#222" stroke-width="1.500"/></svg>
    </div>
</div>

<script src="chart.js"></script>
</body>
</html>
```
FILE: styles.css
```css
*{
    box-sizing: border-box;
}
body{
    margin: 0;
    height: 100vh;
    display: flex;
    flex-direction: column;
    overflow: hidden;
    background: #f0f0f0;
    color: #000;
    font-family: "Open Sans", "Noto Sans", sans-serif;
    font-size: 14px;
}
h1, h2, p, ul{
    margin: 0;
    padding: 0;
    font-size: inherit;
    font-weight: normal;
}
button{
    font: inherit;
    color: inherit;
    border: 0;
    padding: 0;
    background: none;
}
svg{
    display: block;
    flex: none;
}
.defs{
    position: absolute;
}

/* window frame */
.behind{
    height: 5px;
    background: #d4d4d4;
    border-bottom: 1px solid #a8a8a8;
}
.behind-win{
    width: 82%;
    height: 4px;
    background: #e8e6e8;
    border-top: 1px solid #8f898f;
    border-right: 1px solid #777;
}
.titlebar{
    height: 37px;
    display: flex;
    align-items: center;
    background: #fff;
    color: #8f8f8f;
    padding-left: 5px;
    font-size: 15px;
}
.logo{
    width: 22px;
    height: 22px;
    margin-right: 5px;
}
.win-btns{
    margin-left: auto;
    display: flex;
    padding-right: 4px;
}
.win-btns button{
    width: 58px;
    height: 36px;
    display: flex;
    align-items: center;
    justify-content: center;
}
.menubar{
    height: 26px;
    display: flex;
    align-items: center;
    border-bottom: 1px solid #a0a0a0;
}
.menubar a{
    color: #8a8a8a;
    text-decoration: none;
    padding: 0 10px 0 11px;
}
.menu-logo{
    width: 20px;
    height: 20px;
    margin-left: 2px;
    margin-right: -2px;
}
.mdi-btns{
    margin-left: auto;
    display: flex;
    gap: 2px;
    padding-right: 4px;
}
.mdi-btns button{
    width: 22px;
    height: 18px;
    display: flex;
    align-items: center;
    justify-content: center;
    background: #e8ecf0;
    border: 1px solid #fafafa;
}

/* toolbars */
.toolbar{
    height: 34px;
    display: flex;
    border-bottom: 1px solid #a0a0a0;
    border-top: 1px solid #fff;
}
.group{
    display: flex;
    align-items: center;
    padding-right: 1px;
    border-right: 1px solid #909090;
}
.group + .group{
    padding-left: 3px;
}
.grip{
    width: 3px;
    height: 26px;
    margin-right: 1px;
    background: repeating-linear-gradient(#999 0 1px, #f0f0f0 1px 2px);
}
.sep{
    width: 1px;
    height: 28px;
    margin: 0 2px;
    background: #999;
}
.tool{
    width: 34px;
    height: 30px;
    display: flex;
    align-items: center;
    justify-content: center;
}
.tool.drop{
    width: 48px;
    gap: 2px;
    padding-left: 5px;
    justify-content: flex-start;
}
.tool.wide{
    width: auto;
    gap: 3px;
    padding: 0 5px;
}
.tool.order{
    padding-left: 10px;
}
.tool.on{
    background: #f8f8f8;
    border: 1px solid #a0a0a0;
    border-right-color: #fff;
    border-bottom-color: #fff;
    width: 32px;
    margin: 0 1px;
}
.tool.wide.on{
    width: auto;
    padding: 0 4px;
    margin-left: 3px;
}
.tool.tf{
    font-family: "Noto Sans", sans-serif;
    font-size: 12px;
    color: #444;
}
.tool.letter{
    color: #444;
    font-size: 15px;
    font-weight: bold;
}
.tbox{
    border: 1px dotted #555;
    width: 16px;
    line-height: 16px;
}
.right-tools{
    margin-left: auto;
    display: flex;
    align-items: center;
    gap: 6px;
    padding-right: 7px;
}

/* work area */
.work{
    flex: 1;
    min-height: 0;
    display: flex;
    position: relative;
}
.side{
    width: 346px;
    display: flex;
    flex-direction: column;
    border-right: 1px solid #a0a0a0;
}
.panel{
    display: flex;
    flex-direction: column;
    padding: 2px 5px 5px 2px;
    border-bottom: 1px solid #a0a0a0;
}
.market{
    height: 443px;
}
.navigator{
    flex: 1;
    min-height: 0;
}
.panel-head{
    height: 18px;
    display: flex;
    align-items: center;
    font-size: 13px;
    border-bottom: 1px solid #f0f0f0;
}
.panel-head h2{
    flex: 1;
    padding-left: 4px;
    line-height: 17px;
    background: linear-gradient(90deg, #9bb6d3, #b9cfea);
}
.panel-head.light h2{
    background: linear-gradient(90deg, #bfd0e2, #d8e5f3);
}
.panel-head button{
    width: 18px;
    display: flex;
    justify-content: flex-end;
    padding-right: 3px;
}
.panel-body{
    flex: 1;
    min-height: 0;
    background: #fff;
    border: 1px solid #a0a0a0;
    border-bottom: 1px solid #000;
    border-right: 0;
    overflow: hidden;
}
.quotes{
    width: 100%;
    table-layout: fixed;
    border-collapse: collapse;
}
.quotes th, .quotes td{
    height: 25px;
    padding: 0 4px;
    text-align: right;
    font-weight: normal;
    border-right: 1px solid #c8c8c8;
    border-bottom: 1px solid #c8c8c8;
}
.quotes th{
    height: 26px;
    border-right-color: #e4e4e4;
}
.quotes th:first-child, .quotes td:first-child{
    width: 125px;
    text-align: left;
    padding-left: 5px;
}
.quotes th:nth-child(2), .quotes th:nth-child(3){
    width: 84px;
}
.quotes td{
    color: #c8140c;
    background: #f0fdf0;
}
.quotes .rise td{
    color: #1010c8;
}
.quotes .gold td{
    background: #fbf7d2;
}
.quotes tbody td:first-child{
    color: #000;
}
.quotes svg{
    display: inline-block;
    width: 14px;
    height: 12px;
    margin-right: 6px;
    vertical-align: -2px;
}

/* tabs */
.tabs{
    height: 26px;
    display: flex;
    align-items: center;
    padding-left: 3px;
    color: #777;
}
.tabs button{
    height: 18px;
    line-height: 18px;
    padding: 0 13px;
    border-right: 1px solid #555;
    white-space: nowrap;
}
.tabs .active{
    height: 26px;
    margin-top: -1px;
    line-height: 24px;
    padding: 0 12px;
    background: #fff;
    color: #000;
    border: 1px solid #000;
    border-top: 0;
    border-right-width: 2px;
    border-bottom-width: 2px;
}

/* trees */
.scrolled{
    display: flex;
}
.tree{
    flex: 1;
    list-style: none;
    padding: 1px 0 0 1px;
}
.tree li{
    height: 22px;
    display: flex;
    align-items: center;
    white-space: nowrap;
}
.tree svg{
    width: 20px;
    height: 20px;
    margin: 0 8px 0 3px;
}
.tree i{
    width: 26px;
    height: 22px;
    flex: none;
    position: relative;
}
.tree i::before, .tree i::after{
    content: "";
    position: absolute;
    left: 13px;
}
.tree .v::before, .tree .t::before, .tree .box::before{
    top: 0;
    bottom: 0;
    border-left: 1px dotted #777;
}
.tree .l::before, .tree .box.end::before{
    top: 0;
    height: 12px;
    border-left: 1px dotted #777;
}
.tree .box.end::before{
    bottom: auto;
}
.tree .t::after, .tree .l::after{
    top: 11px;
    width: 15px;
    border-top: 1px dotted #777;
}
.tree .box::after{
    left: 8px;
    top: 6px;
    width: 11px;
    height: 11px;
    border: 1px solid #999;
    background: linear-gradient(#3c5a9a, #3c5a9a) center / 7px 1px no-repeat, #fff;
}
.tree .box.plus::after{
    background: linear-gradient(#3c5a9a, #3c5a9a) center / 7px 1px no-repeat, linear-gradient(#3c5a9a, #3c5a9a) center / 1px 7px no-repeat, #fff;
}
.scroll{
    width: 20px;
    background: #f0f0f0;
    display: flex;
    flex-direction: column;
    align-items: center;
    padding: 8px 0 6px;
}
.thumb{
    width: 20px;
    background: #cdcdcd;
}
.nav-thumb{
    height: 34px;
    margin: 25px 0 auto;
}
.list-thumb{
    flex: 1;
    margin: 22px 0 6px;
}

/* chart */
.charts{
    flex: 1;
    min-width: 0;
    display: flex;
    flex-direction: column;
    padding: 1px 3px 0 1px;
}
.chart{
    flex: 1;
    min-height: 0;
    display: flex;
    flex-direction: column;
    gap: 1px;
    padding: 2px 1px 0 2px;
    background: #000;
    color: #fff;
    font-family: "Noto Sans", sans-serif;
    font-size: 12px;
    border-right: 1px solid #888;
}
.pane{
    display: flex;
}
.price{
    flex: 1;
    min-height: 0;
}
.rsi{
    height: 76px;
}
.cci{
    height: 55px;
}
.vol{
    height: 38px;
}
.plot{
    flex: 1;
    min-width: 0;
    position: relative;
    overflow: hidden;
    border: 1px solid #fff;
}
.plot > svg{
    width: 100%;
    height: 100%;
}
.caption{
    position: absolute;
    left: 4px;
    top: 3px;
    display: flex;
    align-items: center;
    gap: 5px;
    line-height: 16px;
}
.price .caption{
    top: 2px;
}
.axis{
    width: 63px;
    position: relative;
    padding-top: 21px;
}
.axis span{
    display: flex;
    align-items: center;
    height: 49px;
}
.axis span::before{
    content: "";
    width: 2px;
    margin-right: 4px;
    border-top: 1px solid #fff;
}
.axis b{
    position: absolute;
    left: 2px;
    top: 118px;
    padding: 0 4px;
    background: #fff;
    color: #000;
    font-weight: normal;
    line-height: 15px;
}
.axis.sub{
    padding: 2px 0 0 4px;
    line-height: 14px;
}
.axis.sub span{
    height: 15px;
}
.axis.sub span::before{
    display: none;
}
.cci .axis.sub{
    padding-top: 1px;
}
.cci .axis.sub span{
    height: 9px;
}
.cci .axis.sub span:first-child{
    height: 16px;
    margin-bottom: 3px;
}
.cci .axis.sub span:last-child{
    margin-top: -5px;
}
.vol .axis.sub{
    padding-top: 0;
}
.vol .axis.sub span{
    height: 19px;
}
.dates{
    height: 25px;
    display: flex;
    line-height: 22px;
}
.dates span{
    width: 96px;
    flex: none;
    position: relative;
}
.dates span::before{
    content: "";
    position: absolute;
    left: 1px;
    top: -1px;
    height: 4px;
    border-left: 1px solid #fff;
}
.chart-tabs{
    height: 24px;
    gap: 1px;
    border-top: 1px solid #000;
    margin-left: -1px;
    padding-left: 6px;
}
.chart-tabs .active{
    height: 24px;
    line-height: 22px;
    padding: 0 13px;
}
.tab-arrows{
    margin-left: auto;
    display: flex;
    gap: 18px;
    padding-right: 10px;
}
.pointer{
    position: absolute;
    left: 1231px;
    top: 202px;
}

/* dialog */
.dialog{
    position: absolute;
    left: 268px;
    top: 62px;
    width: 483px;
    height: 290px;
    display: flex;
    flex-direction: column;
    background: #f0f0f0;
    border: 1px solid #555;
    box-shadow: 0 4px 14px rgba(0, 0, 0, .35);
    font-family: "Noto Sans", sans-serif;
    font-size: 12px;
}
.dialog-head{
    height: 36px;
    display: flex;
    align-items: center;
    padding-left: 9px;
    gap: 5px;
    background: #fff;
    font-family: "Open Sans", sans-serif;
    font-size: 14px;
}
.dialog-head h2{
    flex: 1;
}
.dialog-head button{
    width: 58px;
    display: flex;
    justify-content: center;
}
.dialog-head .help{
    width: 48px;
    font-size: 16px;
}
.dialog-body{
    flex: 1;
    display: flex;
    gap: 10px;
    padding: 12px 7px 9px 9px;
}
.list{
    flex: 1;
    background: #fff;
    border: 1px solid #828790;
    padding-right: 1px;
}
.list mark{
    background: #0078d7;
    color: #fff;
    padding: 0 2px;
    margin-left: -2px;
    line-height: 22px;
}
.dialog-btns{
    width: 93px;
    display: flex;
    flex-direction: column;
    gap: 8px;
}
.dialog-btns button{
    height: 26px;
    background: #e1e1e1;
    border: 1px solid #adadad;
}
.dialog-btns .default{
    margin-top: auto;
    border: 2px solid #0078d7;
}

/* terminal */
.terminal{
    height: 131px;
    display: flex;
    padding-top: 5px;
    border-bottom: 1px solid #a0a0a0;
    border-top: 1px solid #fff;
}
.term-side{
    width: 18px;
    display: flex;
    flex-direction: column;
    padding-right: 2px;
}
.term-side button{
    height: 18px;
    padding-left: 3px;
}
.term-side h2{
    height: 103px;
    writing-mode: vertical-rl;
    transform: rotate(180deg);
    font-size: 13px;
    line-height: 16px;
    padding-top: 3px;
    background: linear-gradient(#bfd0e2, #d8e5f3);
}
.term-main{
    flex: 1;
    min-width: 0;
    display: flex;
    flex-direction: column;
    margin-right: 9px;
    border-top: 1px solid #a0a0a0;
    border-left: 1px solid #a0a0a0;
    background: linear-gradient(#fff 0 92px, #f0f0f0 92px);
}
.orders{
    width: 100%;
    table-layout: fixed;
    border-collapse: collapse;
}
.orders th, .orders td{
    padding: 0 5px;
    text-align: right;
    font-weight: normal;
}
.orders th{
    height: 26px;
    border-right: 1px solid #e4e4e4;
}
.orders td{
    height: 25px;
    line-height: 24px;
    background: #c8c8c8;
    font-weight: bold;
    font-size: 15px;
}
.orders th:first-child, .orders td:first-child{
    text-align: left;
}
.orders td:last-child{
    font-size: 14px;
}
.orders small{
    color: #777;
    padding-left: 8px;
}
.orders svg{
    display: inline-block;
    margin: 0 8px 0 2px;
    vertical-align: -1px;
}
.w101{ width: 101px; }
.w130{ width: 130px; }
.w144{ width: 144px; }
.w186{ width: 186px; }
.w260{ width: 260px; }
.term-tabs{
    margin-top: auto;
    border-top: 1px solid #000;
    padding-left: 2px;
    margin-bottom: 6px;
}
.term-tabs sub{
    color: #e01818;
    font-size: 12px;
    font-weight: bold;
    line-height: 0;
}
.term-tabs button{
    padding: 0 12px;
}

/* status bar */
.status{
    height: 30px;
    display: flex;
    align-items: center;
    padding-top: 3px;
    border-bottom: 1px solid #999;
}
.status span{
    height: 24px;
    line-height: 24px;
    padding-left: 5px;
    border-left: 1px solid #999;
    white-space: nowrap;
}
.status .help-text{
    flex: 1;
    border: 0;
    padding-left: 0;
}
.s149{ width: 149px; }
.s131{ width: 131px; }
.s89{ width: 89px; }
.s86{ width: 86px; }
.status .net{
    width: 183px;
    display: flex;
    align-items: center;
    gap: 5px;
}
.under{
    height: 3px;
    background: #d0d0d0;
}

/* taskbar */
.taskbar{
    height: 50px;
    display: flex;
    background: #343434;
    color: #fff;
}
.start{
    width: 60px;
    background: #1d1d1d;
    display: flex;
    align-items: center;
    justify-content: center;
}
.search{
    width: 430px;
    display: flex;
    align-items: center;
    gap: 10px;
    padding-left: 15px;
    background: #f2f2f2;
    border: 1px solid #bbb;
}
.search input{
    flex: 1;
    border: 0;
    background: none;
    font-family: inherit;
    font-size: 18px;
}
.search input::placeholder{
    color: #333;
}
.apps{
    flex: 1;
    display: flex;
    padding-left: 4px;
}
.apps button{
    flex: 1;
    display: flex;
    flex-direction: column;
    align-items: center;
    justify-content: center;
    position: relative;
}
.apps svg{
    width: 30px;
    height: 30px;
}
.run::after{
    content: "";
    position: absolute;
    left: 6px;
    right: 6px;
    bottom: 0;
    height: 3px;
    background: #76b9ed;
}
.more::after{
    border-right: 8px solid #5d7f9c;
}
.apps .green{
    background: linear-gradient(#4a7a42, #4a7a42) center / 40px 100% no-repeat;
}
.green::after{
    background: #4fe03a;
}
.apps .current{
    background: #575b5f;
}
.current::after{
    left: 0;
    right: 0;
}
.apps .current svg{
    height: 17px;
}
.current span{
    font-size: 11px;
    line-height: 14px;
    font-weight: bold;
    color: #222;
}
.tray{
    width: 236px;
    display: flex;
    align-items: center;
    background: #1f1f1f;
    padding-left: 10px;
}
.tray span{
    margin-left: 15px;
}
.tray time{
    width: 110px;
    text-align: center;
    line-height: 23px;
}
.note{
    margin-left: 6px;
}
```
FILE: chart.js
```js
// levels are counted down from the top of the price pane, three to a pixel
const closes = [
    1450,1440,1428,1440,1446,1490,1480,1487,1491,1452,1455,1462,1440,1437,1448,1454,1432,1430,1323,1335,
    1337,1326,1350,1393,1445,1440,1445,1393,1368,1412,1372,1242,1192,1148,1137,1148,1093,1115,1140,1133,
    1097,1082,1125,1130,1093,1137,1103,1114,1075,1112,1078,1068,1055,1060,1045,1050,1040,1052,1048,1035,
    1046,1050,1042,1056,1075,1133,1143,1114,1153,1097,1070,1090,1080,1072,1064,1060,1068,1050,1040,1048,
    1030,1020,1010,1000,980,960,950,940,920,900,890,880,870,850,840,830,820,810,800,790,
    785,760,762,752,780,782,775,798,780,802,775,790,800,826,812,760,700,670,662,630,
    612,590,540,528,484,495,505,500,520,484,512,515,526,500,478,438,411,436,442,420,
    450,420,440,430,445,350,470,462,475,450,480,520,515,545,565,590,550,540,513,477,
    480,475,472,460,404,410,443,473,430,452,470,483,453,465,486,492,497,468,477,490,
    513,542,552,585,535,557,577,602,604,630,557,548,558,533,515,524,543,513,522,530,
    545,515,457,444,420,408,422,434,450,492,457,430,455,468,432,450,470,441,439,447,
    472,474,487,510,537,528,490,459,463,474,515,472,464,490,498,480,435,395,359,258,
    269,252,282,258,263,272,282,226,268,279,256,237,248,186,227,177,156,188,163,210,
    171,228,231,207,218,202,200,206,195,180,197,267,249,256,260,268,292,337,350,333,
    375,345,269,272,237,240,234,222,437,369,387,360,323,350,399,351,388,419,403
];

const wicks = {
    2:[1368,1450], 3:[1420,1500], 6:[1458,1508], 10:[1417,1465], 17:[1395,1443], 18:[1257,1445],
    19:[1303,1363], 25:[1420,1484], 29:[1340,1464], 34:[1130,1185], 45:[1090,1154], 66:[1130,1244],
    69:[1070,1170], 77:[1045,1107], 113:[790,842], 146:[300,570], 167:[394,494], 169:[405,490], 174:[455,528],
    179:[441,500], 184:[508,596], 187:[570,647], 190:[471,654], 191:[512,622], 192:[507,578],
    193:[502,558], 194:[484,540], 213:[450,506], 215:[411,455], 225:[520,573], 231:[468,533],
    233:[462,521], 236:[432,512], 237:[354,460], 238:[355,417], 240:[229,297], 248:[208,285],
    261:[126,232], 262:[210,272], 267:[183,212], 272:[240,300], 275:[229,270], 283:[250,305],
    286:[213,245], 287:[215,273], 288:[102,461], 289:[336,459], 294:[325,429]
};

// bar number, height
const volumes = [
    [0,14],[3,21],[9,21],[14,2],[15,8],[18,22],[21,14],[24,24],[30,29],[35,20],[38,6],[41,19],[44,14],[48,19],
    [51,17],[54,29],[56,20],[59,22],[60,9],[65,20],[67,14],[70,20],[72,14],[76,29],[80,15],[83,4],[87,17],[90,8],
    [92,17],[96,15],[98,29],[99,32],[103,20],[106,15],[109,12],[111,20],[114,12],[116,20],[119,16],[122,30],
    [126,19],[129,6],[134,20],[136,13],[139,25],[142,16],[146,32],[149,19],[152,10],[154,18],[157,13],[162,22],
    [168,27],[175,14],[179,5],[184,18],[190,29],[198,16],[203,5],[207,20],[213,27],[222,16],[226,6],[231,18],
    [238,30],[246,18],[249,5],[254,18],[261,25],[268,14],[272,4],[277,18],[284,24],[287,20],[288,33],[289,31],
    [290,10],[291,8],[292,10],[293,16],[294,24],[295,17],[296,11],[298,8]
];

const step = 4;

function candles() {
    let out = "";
    for (let i = 0; i < closes.length; i++) {
        let open = i ? closes[i - 1] : 1462,
            close = closes[i],
            top = Math.min(open, close),
            bottom = Math.max(open, close),
            w = wicks[i] || [top - (i * 7) % 17, bottom + (i * 5) % 19],
            x = i * step,
            color = close < open ? "#1be81b" : "#f00a0a";
        out += `<rect x="${x}" y="${w[0] / 3 - 10}" width="1" height="${(w[1] - w[0]) / 3}" fill="${color}"/>`;
        out += `<rect x="${x - 1}" y="${top / 3 - 10}" width="3" height="${Math.max(1, (bottom - top) / 3)}" fill="${color}"/>`;
    }
    return out;
}

function volumeBars() {
    let out = "", last = 0;
    for (let k = 0; k < volumes.length - 1; k++) {
        let [from, a] = volumes[k],
            [to, b] = volumes[k + 1];
        for (let i = from; i < to || (i == 298 && k == volumes.length - 2); i++) {
            let h = Math.round(a + (b - a) * (i - from) / (to - from));
            if (to - from > 2 && i > from) h = Math.max(2, h + (i * 5) % 7 - 3);
            out += `<rect x="${i * step}" y="${36 - h}" width="1" height="${h}" fill="${h > last ? "#118011" : "#d01818"}"/>`;
            last = h;
        }
    }
    return out;
}

function line(points, color) {
    return `<polyline points="${points}" fill="none" stroke="${color}"/>`;
}

function level(y) {
    return `<line x1="1" x2="100%" y1="${y}.5" y2="${y}.5" stroke="#ccc" stroke-dasharray="4 2"/>`;
}

const fast = "130,504 182,453 205,435 230,412 253,396 309,367 334,356 348,348 401,329 421,320 434,313 458,304 495,291 526,266 556,243 586,217 617,197 630,187 664,170 697,156 722,151 745,152 775,154 806,159 829,158 867,154 894,154 902,155 951,155 997,137 1041,115 1083,102 1131,93 1150,85 1179,80 1192,79",
    slow = "450,504 635,407 703,369 749,347 840,303 905,273 967,248 1028,223 1089,198 1154,180 1192,172",
    rsi = "0,22 13,22 21,26 56,24 68,25 73,19 79,21 87,21 96,33 104,33 111,29 117,32 126,22 146,19 158,24 173,22 181,26 197,27 215,22 230,18 238,26 253,26 260,40 266,38 273,40 281,36 293,36 315,31 321,36 330,33 337,37 344,33 364,31 377,37 389,34 393,23 417,22 428,27 444,26 452,32 464,24 477,23 493,17 505,22 517,21 522,26 546,20 558,26 566,24 577,28 581,22 585,32 601,34 607,40 615,36 620,40 635,35 654,35 666,30 676,32 691,31 705,40 712,36 734,42 742,39 752,46 758,40 767,35 780,39 795,37 805,30 819,26 838,30 845,28 856,31 866,29 874,35 885,34 899,40 911,35 920,37 930,31 940,32 950,23 962,25 975,23 997,25 1010,22 1034,20 1042,24 1052,28 1065,25 1076,24 1084,29 1092,35 1105,37 1119,42 1128,34 1138,32 1151,30 1152,46 1157,42 1163,43 1170,39 1177,43 1181,40 1188,43 1192,42",
    cci = "0,21 9,20 17,26 30,29 42,27 60,28 68,23 73,3 81,17 89,23 96,34 103,35 113,30 119,29 125,17 130,14 144,19 156,25 166,25 175,28 187,29 199,26 205,17 213,11 228,17 240,27 254,30 264,45 273,41 285,36 303,32 309,34 315,27 322,30 330,27 337,33 344,24 352,26 360,18 364,20 377,37 383,30 388,30 392,7 396,3 403,14 422,24 446,29 453,32 460,27 468,12 481,19 495,19 507,25 522,28 538,23 548,19 556,27 566,24 577,29 581,20 589,38 593,32 601,39 607,51 615,40 620,45 635,34 642,32 654,24 666,14 676,18 685,17 703,27 712,38 721,41 727,49 734,49 746,33 755,36 764,38 772,34 783,32 795,20 807,12 820,20 832,25 845,27 856,34 866,29 874,27 880,38 887,41 899,50 905,38 911,29 924,34 936,38 942,20 948,14 955,7 962,15 970,19 984,26 997,25 1012,17 1028,20 1046,17 1055,28 1064,33 1070,27 1076,27 1082,43 1089,49 1095,38 1101,34 1113,45 1120,30 1128,23 1137,27 1146,27 1150,33 1157,45 1163,41 1168,35 1177,41 1183,38 1188,41 1192,41";

document.getElementById("price").innerHTML =
    `<line x1="0" x2="100%" y1="124.500" y2="124.500" stroke="#778899"/>` +
    line(fast, "#32cd32") + line(slow, "#e8a33c") + candles() +
    `<path d="M1193 0h12l-6 6z" fill="#778899"/>`;
document.getElementById("rsi").innerHTML = level(22) + level(37) + level(52) + line(rsi, "#3f83e0");
document.getElementById("cci").innerHTML = level(24) + level(40) + line(cci, "#3fa89a");
document.getElementById("vol").innerHTML = volumeBars();
```
